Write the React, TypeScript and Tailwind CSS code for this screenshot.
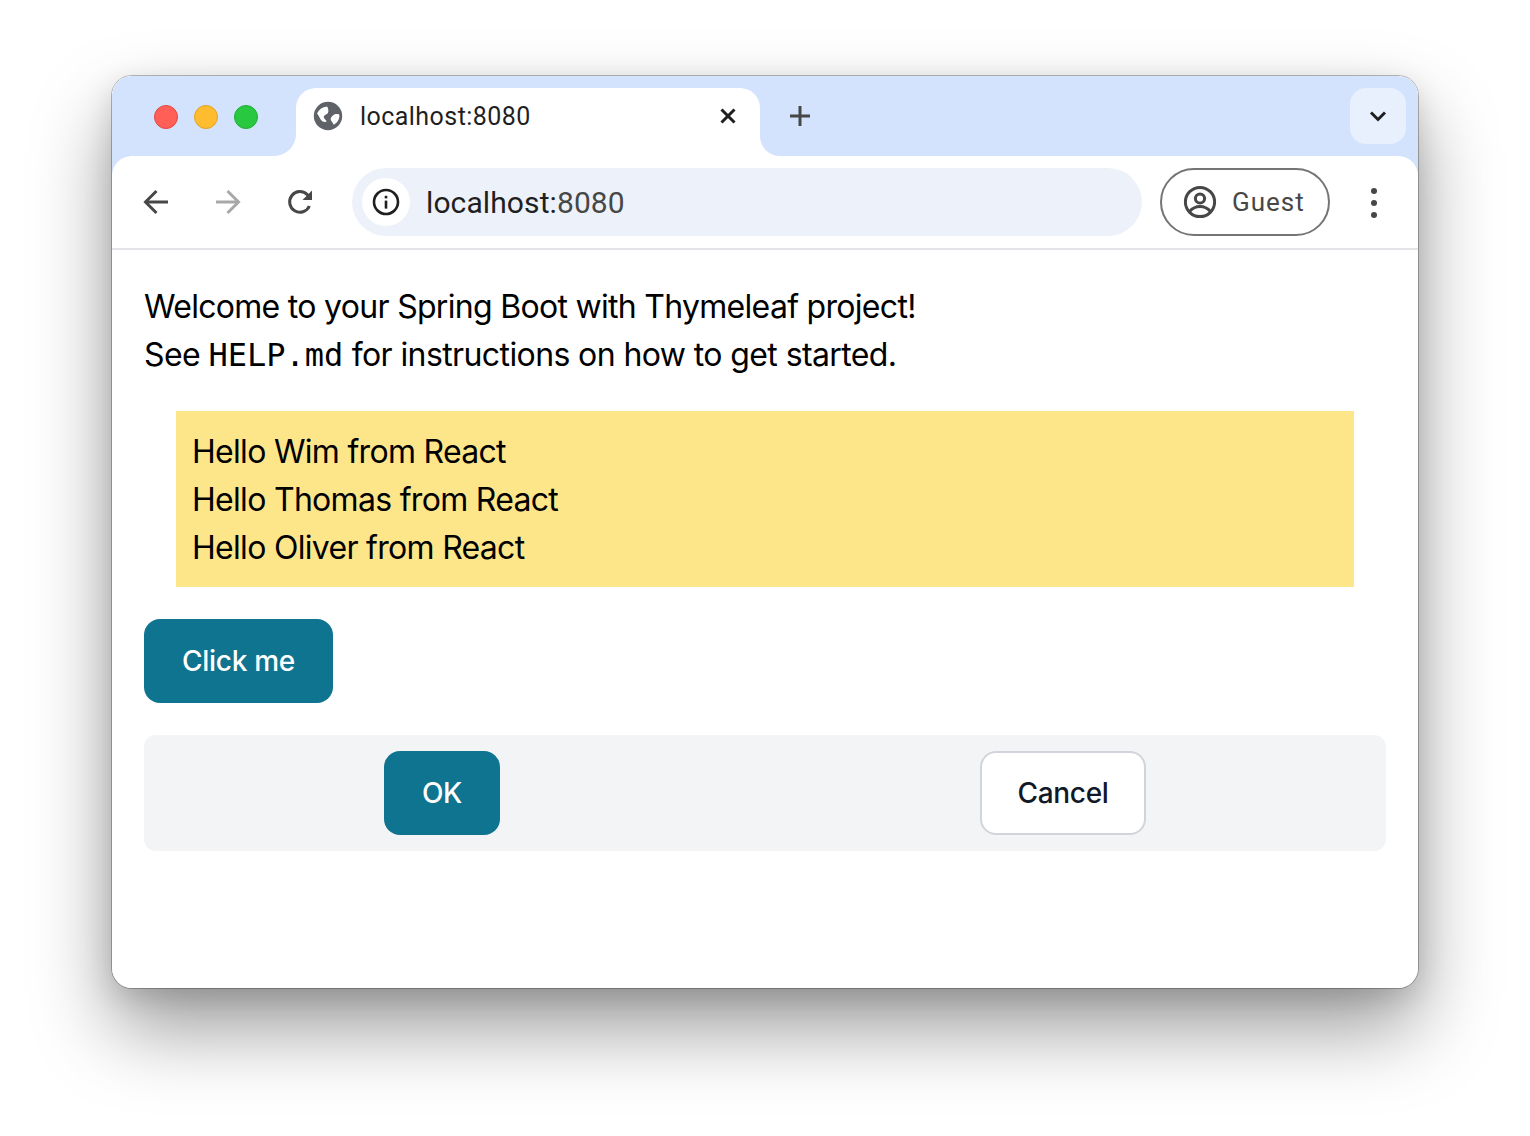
function Globe() {
  return (
    <svg width="30" height="30" viewBox="0 0 30 30" className="shrink-0">
      <circle cx="15" cy="15" r="14.2" fill="#5f6368" />
      <path d="M4 12.5C6 8.5 9.5 6 14 5.6C15.5 7.5 15.8 10.5 14.8 12.2C13.6 13.6 11.5 13.8 10.8 15.4C10.4 17 12.4 18.2 13.8 20.3C12 21.5 9.5 20.8 8 19C6.5 17 5.5 14 4 12.5Z" fill="#fff" />
      <path d="M26.2 13.4C24.2 12.8 21.6 13 20.2 14.2C18.6 15.6 17.2 17.4 17.8 19C18.4 20.6 20.2 21.6 20.4 23.6C23.6 22.6 27.4 17.6 26.2 13.4Z" fill="#fff" />
    </svg>
  );
}

function Back({ color }: { color: string }) {
  return (
    <svg width="28" height="28" viewBox="0 0 28 28" fill="none" stroke={color} strokeWidth="3">
      <path d="M26 14H4" />
      <path d="M14.5 3 3.5 14 14.5 25" />
    </svg>
  );
}

function Reload() {
  return (
    <svg width="28" height="28" viewBox="0 0 28 28" fill="none">
      <path d="M23.4 18A10.3 10.3 0 1 1 21.4 6.8L24 9.6" stroke="#474747" strokeWidth="3" />
      <path d="M26 2.5v9.5h-9.5z" fill="#474747" />
    </svg>
  );
}

function Info() {
  return (
    <svg width="28" height="28" viewBox="0 0 28 28" fill="none">
      <circle cx="14" cy="14" r="12" stroke="#1f1f1f" strokeWidth="2.6" />
      <rect x="12.7" y="12.6" width="2.6" height="8" fill="#1f1f1f" />
      <rect x="12.7" y="7.8" width="2.6" height="2.6" fill="#1f1f1f" />
    </svg>
  );
}

function Avatar() {
  return (
    <svg width="34" height="34" viewBox="0 0 34 34" fill="none" stroke="#474747" strokeWidth="3">
      <circle cx="17" cy="17" r="14.6" />
      <circle cx="17" cy="13.5" r="4.6" />
      <path d="M6.5 26.5C10 22.5 13 21.5 17 21.5s7 1 10.5 5" />
    </svg>
  );
}

export default function App() {
  return (
    <div className="w-[1530px] h-[1136px] bg-white pl-[112px] pt-[76px] font-['Inter',sans-serif] overflow-hidden">
      <div className="w-[1306px] h-[912px] rounded-[20px] bg-[#d3e3fd] shadow-[0_0_0_1px_rgba(0,0,0,0.26),0_40px_80px_0_rgba(0,0,0,0.4),0_8px_28px_0_rgba(0,0,0,0.13)]">
        <div className="h-[912px] rounded-[20px] overflow-hidden flex flex-col bg-white">
          {/* tab strip */}
          <div className="h-[80px] flex bg-white shrink-0">
            <div className="w-[184px] bg-[#d3e3fd] rounded-br-[22px] flex items-center gap-4 pl-[42px] pt-[2px]">
              <span className="w-6 h-6 rounded-full bg-[#ff5f57] border border-[#e2463f]" />
              <span className="w-6 h-6 rounded-full bg-[#febc2e] border border-[#e1a325]" />
              <span className="w-6 h-6 rounded-full bg-[#28c840] border border-[#1fad33]" />
            </div>
            <div className="w-[464px] bg-[#d3e3fd] pt-3">
              <div className="h-[68px] bg-white rounded-t-[20px] flex items-start pt-[13px] pl-[17px] pr-[22px]">
                <Globe />
                <span className="ml-[17px] mt-[1px] leading-[30px] text-[25px] text-[#1f1f1f] font-['Roboto',sans-serif] tracking-[0.45px]">
                  localhost:8080
                </span>
                <svg width="20" height="20" viewBox="0 0 20 20" className="ml-auto mt-[5px]" stroke="#1f1f1f" strokeWidth="3" fill="none">
                  <path d="M3.5 3.5 16.5 16.5M16.5 3.5 3.5 16.5" />
                </svg>
              </div>
            </div>
            <div className="flex-1 bg-[#d3e3fd] rounded-bl-[20px] flex items-start pt-3 pr-3">
              <svg width="24" height="24" viewBox="0 0 24 24" className="ml-[28px] mt-4" stroke="#474747" strokeWidth="3" fill="none">
                <path d="M12 2v20M2 12h20" />
              </svg>
              <div className="ml-auto w-[56px] h-[56px] rounded-2xl bg-[#e9f0fd] flex items-center justify-center">
                <svg width="18" height="12" viewBox="0 0 18 12" stroke="#1f1f1f" strokeWidth="3" fill="none">
                  <path d="M2 2.5 9 9.5 16 2.5" />
                </svg>
              </div>
            </div>
          </div>

          {/* toolbar */}
          <div className="bg-[#d3e3fd] shrink-0">
            <div className="h-[94px] bg-white rounded-t-[20px] border-b-2 border-[#e2e4e7] flex items-start pt-3 pl-[30px]">
              <div className="w-[28px] mt-5"><Back color="#474747" /></div>
              <div className="w-[28px] mt-5 ml-[44px] -scale-x-100"><Back color="#a8a8a8" /></div>
              <div className="w-[28px] mt-5 ml-[44px]"><Reload /></div>
              <div className="ml-[38px] w-[790px] h-[68px] rounded-full bg-[#edf2fa] flex items-center pl-[10px]">
                <div className="w-12 h-12 rounded-full bg-white flex items-center justify-center"><Info /></div>
                <span className="ml-4 text-[30px] text-[#1f1f1f] font-['Roboto',sans-serif] tracking-[0.1px]">localhost:</span>
                <span className="text-[30px] text-[#474747] font-['Roboto',sans-serif] tracking-[0.1px]">8080</span>
              </div>
              <div className="ml-[18px] w-[170px] h-[68px] rounded-full border-2 border-[#757575] flex items-center pl-[21px]">
                <Avatar />
                <span className="ml-[15px] text-[26px] text-[#474747] font-['Roboto',sans-serif] tracking-[1px]">Guest</span>
              </div>
              <div className="ml-[41px] mt-5 flex flex-col gap-[6px]">
                <span className="w-[6px] h-[6px] rounded-full bg-[#474747]" />
                <span className="w-[6px] h-[6px] rounded-full bg-[#474747]" />
                <span className="w-[6px] h-[6px] rounded-full bg-[#474747]" />
              </div>
            </div>
          </div>

          {/* page */}
          <div className="flex-1 px-8 pt-[33px] pb-8 text-black text-[32px] leading-[48px] tracking-[-0.7px]">
            <p>Welcome to your Spring Boot with Thymeleaf project!</p>
            <p className="tracking-[-0.6px]">
              See <code className="font-['DejaVu_Sans_Mono',monospace] text-[32px] tracking-normal">HELP.md</code> for instructions on how to get started.
            </p>
            <div className="mx-8 mt-8 mb-8 pt-[17px] pb-[15px] px-4 bg-[#fde68a]">
              <div>Hello Wim from React</div>
              <div>Hello Thomas from React</div>
              <div>Hello Oliver from React</div>
            </div>
            <button className="block w-[189px] h-[84px] rounded-2xl bg-[#0f7490] text-white text-[28px] font-medium tracking-[-0.3px]">Click me</button>
            <div className="mt-8 py-4 rounded-xl bg-[#f3f4f6] flex justify-around">
              <button className="w-[116px] h-[84px] rounded-2xl bg-[#0f7490] text-white text-[28px] font-medium tracking-[-0.3px]">OK</button>
              <button className="w-[166px] h-[84px] rounded-2xl bg-white border-2 border-[#d1d5db] text-[#111827] text-[28px] font-medium tracking-[-0.3px]">Cancel</button>
            </div>
          </div>
        </div>
      </div>
    </div>
  );
}
